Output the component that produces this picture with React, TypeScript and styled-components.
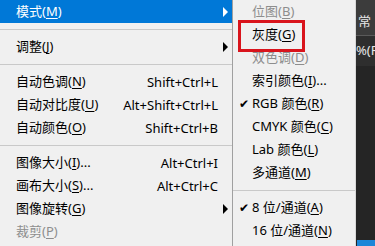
import styled, { createGlobalStyle } from "styled-components";

const GlobalStyle = createGlobalStyle`
  html, body {
    margin: 0;
    padding: 0;
    background: #f0f0f0;
  }
  #root {
    width: 375px;
    height: 246px;
    overflow: hidden;
  }
`;

// Page layout
const Screen = styled.div`
  display: flex;
  width: 375px;
  height: 246px;
  font-family: "Noto Sans", "Noto Sans CJK SC", sans-serif;
  font-size: 13px;
  color: #000;
  position: relative;
  overflow: hidden;
`;

const MainMenu = styled.div`
  width: 232px;
  flex: none;
  background: #f0f0f0;
  border-right: 1px solid #a0a0a0;
  display: flex;
  flex-direction: column;
`;

const SubMenu = styled.div`
  width: 122px;
  flex: none;
  background: #f0f0f0;
  display: flex;
  flex-direction: column;
`;

const Item = styled.div<{ $active?: boolean; $disabled?: boolean; $pad?: number }>`
  height: 23px;
  flex: none;
  display: grid;
  grid-template-columns: ${(p) => p.$pad ?? 16}px 1fr auto 14px;
  align-items: center;
  white-space: nowrap;
  background: ${(p) => (p.$active ? "#0078d7" : "transparent")};
  color: ${(p) => (p.$active ? "#fff" : p.$disabled ? "#8d8d8d" : "#000")};
`;

const Check = styled.span`
  font-size: 12px;
  text-align: right;
  padding-right: 3px;
`;

const Label = styled.span`
  line-height: 23px;
`;

const Shortcut = styled.span`
  text-align: right;
`;

const Arrow = styled.span<{ $light?: boolean }>`
  justify-self: center;
  width: 0;
  height: 0;
  border-top: 5px solid transparent;
  border-bottom: 5px solid transparent;
  border-left: 5px solid ${(p) => (p.$light ? "#fff" : "#000")};
`;

const Key = styled.u`
  text-underline-offset: 2px;
`;

const Separator = styled.div`
  height: 12px;
  flex: none;
  display: flex;
  align-items: center;
  &::after {
    content: "";
    flex: 1;
    height: 1px;
    background: #c9c9c9;
  }
`;

const DarkPanel = styled.div`
  flex: 1;
  min-width: 0;
  display: flex;
  flex-direction: column;
  background: #252525;
  border-left: 1px solid #d8d8d8;
  color: #e6e6e6;
  white-space: nowrap;
  overflow: hidden;
`;

const BlendBar = styled.div`
  height: 36px;
  flex: none;
  background: #3c3c3c;
  border-bottom: 1px solid #5a5a5a;
  display: flex;
  align-items: center;
  padding-left: 2px;
  padding-top: 6px;
  box-sizing: border-box;
`;

const TabBar = styled.div`
  height: 30px;
  flex: none;
  background: #2e2e2e;
  display: flex;
  align-items: center;
  padding-bottom: 2px;
  box-sizing: border-box;
`;

const Canvas = styled.div`
  flex: 1;
`;

const StatusStrip = styled.div`
  height: 6px;
  flex: none;
  background: #1c86d8;
  margin-left: 1px;
`;

const Highlight = styled.div`
  position: absolute;
  left: 238px;
  top: 20px;
  width: 61px;
  height: 26px;
  border: 3px solid #d9141c;
`;

type Entry =
  | { sep: true }
  | {
      sep?: false;
      text: string;
      key: string;
      tail?: string;
      shortcut?: string;
      arrow?: boolean;
      active?: boolean;
      disabled?: boolean;
      checked?: boolean;
    };

const mainItems: Entry[] = [
  { text: "模式", key: "M", arrow: true, active: true },
  { sep: true },
  { text: "调整", key: "J", arrow: true },
  { sep: true },
  { text: "自动色调", key: "N", shortcut: "Shift+Ctrl+L" },
  { text: "自动对比度", key: "U", shortcut: "Alt+Shift+Ctrl+L" },
  { text: "自动颜色", key: "O", shortcut: "Shift+Ctrl+B" },
  { sep: true },
  { text: "图像大小", key: "I", tail: "...", shortcut: "Alt+Ctrl+I" },
  { text: "画布大小", key: "S", tail: "...", shortcut: "Alt+Ctrl+C" },
  { text: "图像旋转", key: "G", arrow: true },
  { text: "裁剪", key: "P", disabled: true },
];

const subItems: Entry[] = [
  { text: "位图", key: "B", disabled: true },
  { text: "灰度", key: "G" },
  { text: "双色调", key: "D", disabled: true },
  { text: "索引颜色", key: "I", tail: "..." },
  { text: "RGB 颜色", key: "R", checked: true },
  { text: "CMYK 颜色", key: "C" },
  { text: "Lab 颜色", key: "L" },
  { text: "多通道", key: "M" },
  { sep: true },
  { text: "8 位/通道", key: "A", checked: true },
  { text: "16 位/通道", key: "N" },
];

const renderItems = (items: Entry[], pad: number) =>
  items.map((it, i) => {
    if (it.sep) return <Separator key={i} />;
    return (
      <Item key={i} $active={it.active} $disabled={it.disabled} $pad={pad}>
        <Check>{it.checked ? "✔" : ""}</Check>
        <Label>
          {it.text}(<Key>{it.key}</Key>){it.tail}
        </Label>
        <Shortcut>{it.shortcut}</Shortcut>
        {it.arrow ? <Arrow $light={it.active} /> : <span />}
      </Item>
    );
  });

const App = () => {
  return (
    <>
      <GlobalStyle />
      <Screen>
        <MainMenu>{renderItems(mainItems, 16)}</MainMenu>
        <SubMenu>{renderItems(subItems, 19)}</SubMenu>
        <DarkPanel>
          <BlendBar>常</BlendBar>
          <TabBar>%(R</TabBar>
          <Canvas />
          <StatusStrip />
        </DarkPanel>
        <Highlight />
      </Screen>
    </>
  );
};

export default App;
